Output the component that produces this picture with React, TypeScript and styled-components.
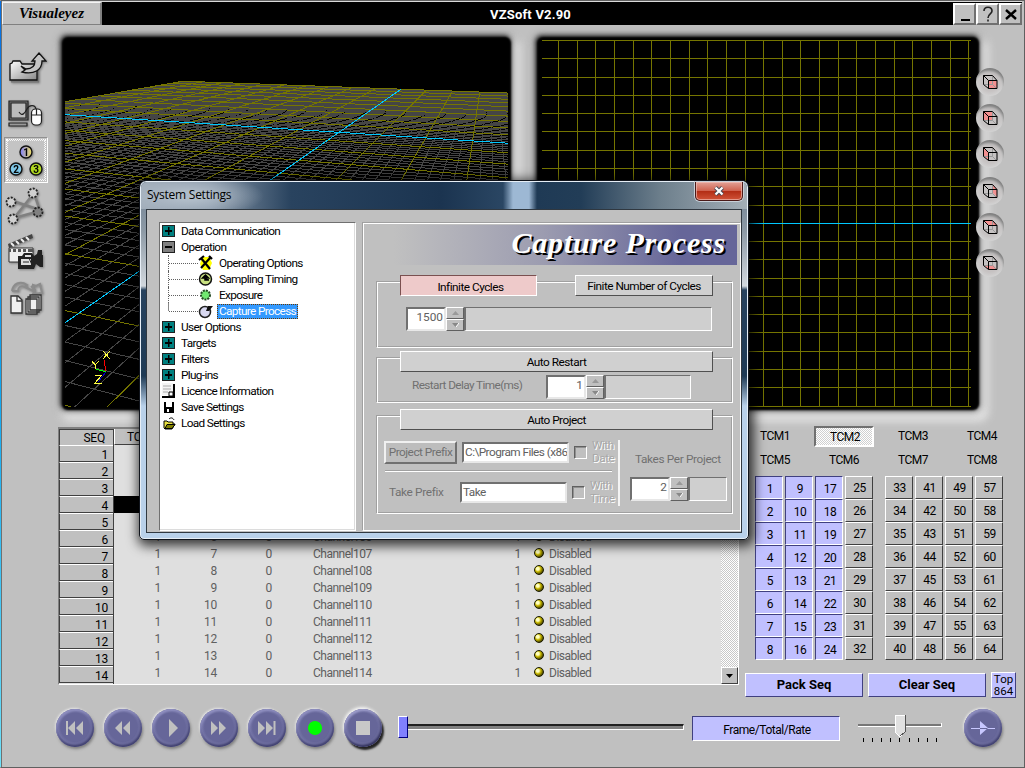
import React from "react";
import styled, { createGlobalStyle, css } from "styled-components";

const UI = `Roboto, "Liberation Sans", sans-serif`;
const FACE = "#c0c0c0";
const LILAC = "#c0c0ff";

const GlobalStyle = createGlobalStyle`
  *, *::before, *::after { box-sizing: border-box; }
  body { margin: 0; background: ${FACE}; overflow: hidden; }
  svg { display: block; }
`;

const checker = (a: string, b: string) => css`
  background: repeating-conic-gradient(${a} 0 25%, ${b} 0 50%) 0 0 / 2px 2px;
`;

/* ---------- window frame ---------- */

const Window = styled.div`
  position: relative;
  width: 1025px;
  height: 768px;
  display: flex;
  flex-direction: column;
  background: linear-gradient(${FACE}, ${FACE}) padding-box,
    linear-gradient(#0a6fe0, #12a5ee 50%, #6fe0f8) border-box;
  border: 1px solid #606060;
  border-left-color: transparent;
  box-shadow: inset 1px 0 0 #707070;
  font: 12px/14px ${UI};
  letter-spacing: -0.2px;
  color: #000;
  overflow: hidden;
`;

const TitleBar = styled.header`
  display: flex;
  height: 24px;
  background: #000;
  border-top: 1px solid #d8d8d8;
  margin: 0 2px 0 1px;
`;

const Brand = styled.div`
  width: 100px;
  background: ${FACE};
  border: 1px solid #f4f4f4;
  border-right: 2px solid #808080;
  border-bottom-color: #808080;
  font: italic bold 15px/21px "Liberation Serif", serif;
  letter-spacing: 0;
  text-align: center;
  padding-right: 0;
`;

const AppTitle = styled.h1`
  flex: 1;
  margin: 0;
  color: #fff;
  font: bold 13px/25px ${UI};
  letter-spacing: 0.2px;
  text-align: center;
  padding-left: 6px;
`;

const WindowButton = styled.button`
  width: 23px;
  height: 22px;
  margin-top: 1px;
  padding: 0;
  display: grid;
  place-items: center;
  background: ${FACE};
  border: 2px solid;
  border-color: #fff #707070 #707070 #fff;
`;

const Upper = styled.section`
  display: flex;
  height: 402px;
`;

const Sidebar = styled.nav`
  width: 64px;
  padding: 20px 0 0 3px;
  display: flex;
  flex-direction: column;
  flex: none;
`;

const Tool = styled.button<{ $active?: boolean }>`
  width: 44px;
  height: 46px;
  padding: 0;
  border: 1px solid transparent;
  background: none;
  display: grid;
  place-items: center;
  svg {
    filter: drop-shadow(1px 1px 1px #808080);
  }
  ${(p) =>
    p.$active &&
    css`
      border-color: #909090 #fff #fff #909090;
      background: #c4c4c4;
      &::after {
        content: "";
        grid-area: 1 / 1;
        width: 40px;
        height: 42px;
        border: 1px dotted #fff;
        outline: 1px dotted #f4f4f4;
        outline-offset: -2px;
      }
      svg {
        grid-area: 1 / 1;
      }
    `}
`;

const Viewport = styled.div<{ $w: number }>`
  width: ${(p) => p.$w}px;
  height: 367px;
  margin-top: 15px;
  flex: none;
  background: #000;
  border-radius: 3px;
  box-shadow: 0 0 2px 3px #000, -1px -1px 4px 4px #333, 0 0 7px 7px #6a6a6a66, 4px 6px 8px 8px #e8e8e8;
`;

const Gap = styled.div`
  width: 32px;
  flex: none;
`;

const ViewButtons = styled.div`
  display: flex;
  flex-direction: column;
  gap: 8.2px;
  padding-top: 43px;
`;

const ViewButton = styled.button`
  width: 28px;
  height: 28px;
  border: 0;
  padding: 0 0 0 1px;
  border-radius: 50%;
  background: radial-gradient(#c6c2c2 45%, #d2d2d2 70%, #c4c4c4);
  box-shadow: inset -1px 4px 3px -1px #7d7d7d;
  display: grid;
  place-items: center;
`;

/* ---------- sequence table ---------- */

const Lower = styled.section`
  display: flex;
  height: 273px;
  padding-left: 57px;
`;

const Table = styled.div`
  width: 681px;
  height: 258px;
  display: flex;
  border: 1px solid;
  border-color: #808080 #fff #fff #808080;
  border-top-width: 2px;
  background: #dfdfdf;
`;

const SeqColumn = styled.div`
  width: 55px;
  border-right: 1px solid #404040;
`;

const HeadCell = styled.div<{ $w: number }>`
  width: ${(p) => p.$w}px;
  height: 16px;
  line-height: 17px;
  text-align: right;
  padding-right: 8px;
  background: ${FACE};
  border-left: 1px solid #404040;
  border-top: 1px solid #404040;
`;

const SeqCell = styled.div`
  height: 17px;
  padding-right: 5px;
  line-height: 18px;
  text-align: right;
  background: ${FACE};
  border-left: 1px solid #404040;
  border-top: 1px solid #fff;
  border-bottom: 1px solid #404040;
`;

const Body = styled.div`
  flex: 1;
`;

const BodyHead = styled.div`
  height: 16px;
  line-height: 17px;
  padding-left: 12px;
  background: ${FACE};
  border-left: 1px solid #fff;
  border-bottom: 1px solid #404040;
`;

const Row = styled.div<{ $active?: boolean }>`
  height: 17px;
  line-height: 15px;
  display: grid;
  grid-template-columns: 47px 56px 55px 41px 105px 103px 12px 1fr;
  color: #606060;
  background: ${(p) => (p.$active ? "#000" : "transparent")};
  & > :nth-child(-n + 3),
  & > :nth-child(6) {
    text-align: right;
  }
  & > :nth-child(5),
  & > :nth-child(8) {
    letter-spacing: -0.5px;
  }
`;

const Bullet = styled.i`
  width: 10px;
  height: 10px;
  margin: 1px 0 0 13px;
  border-radius: 50%;
  border: 1.5px solid #1a1a00;
  background: radial-gradient(circle at 35% 35%, #ffffc0 18%, #c8b800 40%, #4a4400 75%);
`;

const Status = styled.span`
  padding-left: 16px;
`;

const Scrollbar = styled.div`
  width: 17px;
  display: flex;
  align-items: flex-end;
  ${checker("#fff", "#c8c8c8")}
`;

const ScrollDown = styled.button`
  width: 17px;
  height: 17px;
  padding: 0;
  border: 1px solid;
  border-color: #fff #404040 #404040 #fff;
  background: ${FACE};
  display: grid;
  place-items: center;
`;

/* ---------- marker panel ---------- */

const MarkerPanel = styled.div`
  width: 282px;
  padding: 0 0 0 1px;
`;

const Tabs = styled.div`
  display: grid;
  grid-template-columns: repeat(4, 69px);
  grid-auto-rows: 24px;
  justify-items: center;
  align-items: center;
  height: 50px;
  margin-top: -3px;
`;

const Tab = styled.button<{ $active?: boolean }>`
  width: 60px;
  height: 21px;
  padding: 0 0 0 1px;
  font: inherit;
  letter-spacing: -0.5px;
  border: 2px solid transparent;
  background: none;
  ${(p) =>
    p.$active &&
    css`
      ${checker("#fff", "#d0d0d0")}
      border-color: #707070 #fff #fff #707070;
      padding: 1px 0 0 3px;
    `}
`;

const Markers = styled.div`
  display: flex;
  gap: 12px;
  padding: 2px 0 0 15px;
`;

const MarkerBlock = styled.div`
  display: grid;
  grid-auto-flow: column;
  grid-template-rows: repeat(8, 23px);
  grid-template-columns: repeat(4, 28px);
  column-gap: 2px;
`;

const Marker = styled.button<{ $on: boolean }>`
  font: 12px/14px ${UI};
  letter-spacing: -0.4px;
  border: 1px solid;
  background: ${(p) => (p.$on ? LILAC : FACE)};
  border-color: ${(p) => (p.$on ? "#404080 #fff #fff #404080" : "#fff #404040 #404040 #fff")};
  padding: ${(p) => (p.$on ? "2px 0 0 2px" : "0 0 0 1px")};
`;

const Actions = styled.div`
  display: flex;
  align-items: center;
  gap: 5px;
  padding: 12px 0 0 5px;
`;

const Action = styled.button<{ $w: number; $small?: boolean }>`
  width: ${(p) => p.$w}px;
  height: ${(p) => (p.$small ? 26 : 24)}px;
  padding: 0;
  font: ${(p) => (p.$small ? `11.5px/12px ${UI}` : `bold 13px/14px ${UI}`)};
  letter-spacing: 0;
  background: ${LILAC};
  border: 1px solid;
  border-color: #fff #404080 #404080 #fff;
`;

/* ---------- transport ---------- */

const Transport = styled.footer`
  display: flex;
  align-items: center;
  height: 56px;
  padding-left: 55px;
`;

const RoundButton = styled.button<{ $dark?: boolean }>`
  width: 38px;
  height: 38px;
  margin-right: 10px;
  flex: none;
  padding: 0;
  border: 0;
  border-radius: 50%;
  display: grid;
  place-items: center;
  background: radial-gradient(circle at 50% 48%, #666699 52%, #7676a8 62%, #5a5a8e 72%);
  box-shadow: ${(p) =>
    p.$dark
      ? "inset 1px 2px 2px #9c9cca, inset -1px -2px 3px #30305a, 2px 3px 2px #222, -1px -2px 3px #f4f4f4"
      : "inset 1px 2px 2px #8f8fc0, inset -1px -2px 3px #40406e, 1px 2px 3px #7c7c7c, -1px -1px 2px #e8e8e8"};
`;

const Timeline = styled.div`
  width: 286px;
  margin: -3px 0 0 6px;
  display: flex;
  align-items: center;
`;

const TimeThumb = styled.div`
  width: 10px;
  height: 22px;
  background: #8080ff;
  border: 1px solid;
  border-color: #fff #000080 #000080 #fff;
`;

const TimeTrack = styled.div`
  flex: 1;
  height: 6px;
  border-top: 2px solid #202020;
  border-bottom: 1px solid #fff;
  border-right: 1px solid #fff;
  background: #808080;
`;

const FrameBox = styled.div`
  width: 148px;
  height: 25px;
  margin-left: 8px;
  padding-left: 2px;
  background: ${LILAC};
  border: 1px solid;
  border-color: #404080 #fff #fff #404080;
  line-height: 26px;
  letter-spacing: -0.45px;
  text-align: center;
`;

const RateSlider = styled.div`
  margin: 2px 21px 0 17px;
`;

/* ---------- settings dialog ---------- */

const Dialog = styled.section`
  position: absolute;
  left: 138px;
  top: 179px;
  width: 610px;
  height: 360px;
  padding: 0 6px 7px;
  border: 1px solid #10141c;
  border-radius: 7px 7px 5px 5px;
  background: linear-gradient(#6e7f92 0, #8d9aa6 50px, #d2d8de 105px, #28435f 109px, #1e3a55 195px, #b9d1ea 225px, #b9d1ea);
  box-shadow: inset 0 0 0 1px #e6eef6, 2px 3px 12px 3px rgba(0, 0, 0, 0.75);
  font: 11.8px/15px ${UI};
  letter-spacing: -0.5px;
`;

const DialogTitle = styled.div`
  height: 27px;
  margin: 1px -5px 0;
  padding-left: 6px;
  display: flex;
  justify-content: space-between;
  border-radius: 6px 6px 0 0;
  background: radial-gradient(ellipse 75px 22px at 48px 14px, #b0bcc8 20%, transparent),
    linear-gradient(90deg, #9fabb8 0, #8494a5 70px, #29435f 150px, #1b3450 300px, #2a4663 362px, #9db8d4 372px, #9db8d4 388px, #1f3a55 396px, #223d57 440px, #6d7f8c 520px, #a4afb7 100%);
  font: 12px/26px "Open Sans", "Noto Sans", sans-serif;
  letter-spacing: -0.25px;
`;

const CloseButton = styled.button`
  width: 48px;
  height: 19px;
  margin-right: 4px;
  padding: 0;
  display: grid;
  place-items: center;
  border: 1px solid #4a1a18;
  border-top: 0;
  border-radius: 0 0 5px 5px;
  background: linear-gradient(#e2a196, #cf6350 48%, #b22c14 50%, #d05338);
  box-shadow: inset 0 0 0 1px #f0c0b8aa, 0 0 0 1px #c8d0d8;
`;

const Client = styled.div`
  height: 324px;
  display: flex;
  background: ${FACE};
  border: 1px solid #303840;
  padding: 12px 0 1px 12px;
`;

const Tree = styled.ul`
  width: 197px;
  height: 309px;
  flex: none;
  margin: 0;
  padding: 0 0 0 2px;
  list-style: none;
  background: #fff;
  border: 1px solid;
  border-color: #707070 #fff #fff #707070;
  box-shadow: inset -1px -1px 0 #dcdcdc;
`;

const TreeItem = styled.li<{ $child?: boolean }>`
  height: 16px;
  display: flex;
  align-items: center;
  white-space: nowrap;
  letter-spacing: -0.65px;
  ${(p) =>
    p.$child &&
    css`
      margin-left: 6px;
      border-left: 1px dotted #606060;
      &::before {
        content: "";
        width: 29px;
        border-top: 1px dotted #606060;
      }
      &:has(b) {
        border-left: 0;
        background: linear-gradient(#888, #888) 0 0 / 1px 8px no-repeat;
        padding-left: 1px;
      }
    `}
  svg {
    flex: none;
    margin-right: ${(p) => (p.$child ? 4 : 2)}px;
  }
  span, b {
    font-weight: 400;
    padding: 0 2px;
    line-height: 15px;
  }
  b {
    color: #fff;
    background: #3399ff;
    outline: 1px dotted #6b3a00;
    outline-offset: -1px;
  }
`;

const Toggle = styled.i<{ $open?: boolean }>`
  width: 13px;
  height: 12px;
  margin: 0 4px 0 0;
  border: 1px solid #202020;
  background: linear-gradient(#000, #000) center / 7px 2px no-repeat,
    linear-gradient(#000, #000) center / ${(p) => (p.$open ? "0 0" : "1.5px 8px")} no-repeat,
    ${(p) => (p.$open ? "#808080" : "#008080")};
`;

const Pane = styled.div`
  flex: 1;
  min-width: 0;
  margin-left: 6px;
  padding: 2px 0 0;
  border: 1px solid #a0a0a0;
  border-bottom-color: #fff;
  border-right-color: #fff;
  box-shadow: inset 1px 1px 0 #fff;
`;

const Banner = styled.h2`
  height: 40px;
  margin: 0 3px 0 1px;
  padding-right: 11px;
  background: linear-gradient(90deg, ${FACE} 8%, #9c9cb0 48%, #666699 85%);
  color: #fff;
  font: italic bold 30px/35px "Liberation Serif", serif;
  letter-spacing: 0.8px;
  text-align: right;
  text-shadow: 2px 2px 0 #000;
`;

const Group = styled.div<{ $h: number; $top: number }>`
  height: ${(p) => p.$h}px;
  margin: ${(p) => p.$top}px 7px 0 13px;
  border: 1px solid;
  border-color: #a0a0a0 #fff #fff #a0a0a0;
  box-shadow: inset 1px 1px 0 #fff, inset -1px -1px 0 #a0a0a0;
`;

const GroupHead = styled.div`
  display: flex;
  justify-content: space-between;
  margin: -7px 19px 0 23px;
  position: relative;
`;

const Push = styled.button<{ $w: number; $on?: boolean }>`
  width: ${(p) => p.$w}px;
  height: 21px;
  padding: ${(p) => (p.$on ? "3px 0 0 4px" : "1px 0 0")};
  font: inherit;
  letter-spacing: inherit;
  white-space: nowrap;
  background: ${(p) => (p.$on ? "#eecaca" : "#d0d0d0")};
  border: 1px solid;
  border-color: ${(p) => (p.$on ? "#7a5050 #fff #fff #7a5050" : "#fff #505050 #505050 #fff")};
`;

const SpinRow = styled.div<{ $m: string }>`
  display: flex;
  align-items: flex-start;
  margin: ${(p) => p.$m};
`;

const Field = styled.div<{ $w: number; $h: number; $right?: boolean }>`
  width: ${(p) => p.$w}px;
  height: ${(p) => p.$h}px;
  flex: none;
  overflow: hidden;
  white-space: nowrap;
  padding: 0 1px;
  background: #fff;
  color: #606060;
  line-height: 17px;
  letter-spacing: ${(p) => (p.$right ? 0 : -0.55)}px;
  text-align: ${(p) => (p.$right ? "right" : "left")};
  border: 2px solid;
  border-color: #707070 #e8e8e8 #e8e8e8 #707070;
`;

const Spinner = styled.div`
  width: 18px;
  height: 24px;
  flex: none;
  display: grid;
  grid-template-rows: 1fr 1fr;
`;

const SpinButton = styled.button`
  padding: 0;
  border: 1px solid;
  border-color: #fff #606060 #606060 #fff;
  background: ${FACE};
  display: grid;
  place-items: center;
`;

const Slot = styled.div<{ $w: number }>`
  width: ${(p) => p.$w}px;
  height: 24px;
  background: #cfcfcf;
  border: 1px solid;
  border-color: #707070 #fff #fff #707070;
  border-left-width: 2px;
`;

const Muted = styled.span`
  color: #707070;
  white-space: nowrap;
  letter-spacing: -0.35px;
`;

const DelayLabel = styled(Muted)`
  width: 134px;
  padding-top: 3px;
  letter-spacing: -0.6px;
`;

const ProjectBody = styled.div`
  display: flex;
  padding: 10px 0 0 7px;
`;

const PrefixColumn = styled.div`
  width: 236px;
  height: 66px;
  flex: none;
  border-right: 2px solid #f4f4f4;
`;

const PrefixRow = styled.div<{ $take?: boolean }>`
  display: flex;
  align-items: center;
  height: ${(p) => (p.$take ? 32 : 26)}px;
  margin-top: ${(p) => (p.$take ? 4 : -1)}px;
`;

const Divider = styled.hr`
  width: 227px;
  height: 2px;
  margin: 5px 0 0 1px;
  border: 0;
  border-top: 1px solid #a0a0a0;
  background: #fff;
`;

const PrefixButton = styled.button`
  width: 73px;
  height: 23px;
  flex: none;
  margin-right: 5px;
  padding: 0;
  font: inherit;
  letter-spacing: inherit;
  white-space: nowrap;
  color: #707070;
  background: #bdbdbd;
  border: 2px solid;
  border-color: #f0f0f0 #707070 #707070 #f0f0f0;
`;

const PrefixLabel = styled(Muted)`
  width: 76px;
  flex: none;
  padding-left: 5px;
`;

const CheckBox = styled.div`
  width: 13px;
  height: 13px;
  margin: 0 5px;
  border: 1px solid;
  border-color: #606060 #fff #fff #606060;
  box-shadow: inset 1px 1px 0 #909090;
  flex: none;
`;

const Embossed = styled.span`
  line-height: 13px;
  color: #a8a8a8;
  text-shadow: 1px 1px 0 #fff;
`;

const TakesColumn = styled.div`
  padding: 12px 0 0 10px;
  ${Muted} {
    padding-left: 5px;
  }
`;

/* ---------- drawings ---------- */

type Pt = [number, number];

const FLOOR = { c: [339, 132.3], a: -0.0254, va: [-1280, 28], b: -0.0705, vb: [489, 28] };

function project(u: number, v: number): Pt {
  const s = u * FLOOR.a;
  const t = v * FLOOR.b;
  const w = 1 + s + t;
  return [
    (FLOOR.c[0] + s * FLOOR.va[0] + t * FLOOR.vb[0]) / w - 65,
    (FLOOR.c[1] + s * FLOOR.va[1] + t * FLOOR.vb[1]) / w - 40,
  ];
}

function floorPath(filter: (i: number) => boolean) {
  let d = "";
  const seg = (p: Pt, q: Pt) => {
    d += `M${p[0].toFixed(1)} ${p[1].toFixed(1)}L${q[0].toFixed(1)} ${q[1].toFixed(1)}`;
  };
  for (let i = -50; i <= 50; i++) {
    if (!filter(i)) continue;
    const k = i / 5;
    seg(project(k, -10), project(k, 10));
    seg(project(-10, k), project(10, k));
  }
  return d;
}

const GREY_LINES = floorPath((i) => i % 5 !== 0);
const OLIVE_LINES = floorPath((i) => i % 5 === 0 && i !== 0);
const AXIS_LINES = floorPath((i) => i === 0);

const Perspective = () => (
  <svg width="443" height="367" fill="none" strokeWidth="1" shapeRendering="crispEdges">
    <path d={GREY_LINES} stroke="#454545" />
    <path d={OLIVE_LINES} stroke="#757500" />
    <path d={AXIS_LINES} stroke="#00c8ff" />
    <path d="M41 332L39 320" stroke="#f00" />
    <path d="M41 332L31 329" stroke="#0f0" />
    <path d="M41 332L33 342" stroke="#00c" />
    <path d="M38 319l7-8M38 311l7 8M27 321l3 4 4-4M30 325v4M30 335h7l-7 8h7" stroke="#ffff40" />
  </svg>
);

const Ortho = () => {
  const h = Array.from({ length: 21 }, (_, i) => Math.round(i * 18.28) + 0.5);
  const v = Array.from({ length: 23 }, (_, i) => Math.round(18 + i * 18.65) + 0.5);
  return (
    <svg width="436" height="367" stroke="#757500" shapeRendering="crispEdges">
      {v.map((x) => (
        <path key={x} d={`M${x} 0V367`} />
      ))}
      {h.map((y, i) => (
        <path key={y} d={`M2 ${y}H431`} stroke={i === 10 ? "#00c8ff" : undefined} />
      ))}
    </svg>
  );
};

const FACES = ["M5 5h9v8H5z", "M1 1h9v8H1z", "M1 1l4 4v8l-4-4z", "M10 1l4 4v8l-4-4z", "M1 1h9l4 4H5z", "M1 9h9l4 4H5z"];

const Cube = ({ face }: { face: number }) => (
  <svg width="15" height="14" fill="none" stroke="#000">
    <path d={FACES[face]} fill="#f29090" stroke="none" />
    <path d="M9.500 1v8.500H1M9.500 9.500l4 4" stroke="#999" />
    <path d="M5.500 5.500h8.500v8H5.500zM.5 .5h9l4.500 5M.5 .5v9l5 4M.5 .5l5 5" />
  </svg>
);

const OpenProject = () => (
  <svg width="42" height="42" viewBox="0 0 42 42" stroke="#111" strokeWidth="1.3">
    <defs>
      <linearGradient id="metal" x1="0" y1="0" x2="1" y2="1">
        <stop offset="0" stopColor="#fff" />
        <stop offset="1" stopColor="#888" />
      </linearGradient>
    </defs>
    <path d="M6 34.500h27V17" stroke="#777" strokeWidth="2" fill="none" />
    <path d="M5 33V17l2-1 1-2h7l2 3h15v16z" fill="url(#metal)" />
    <path d="M16 19l5 3c7 0 9-4 9-8h-3l7-8 7 8h-4c0 9-8 14-20 11l3-2z" fill="#c4c4c4" />
  </svg>
);

const Computer = () => (
  <svg width="42" height="42" viewBox="0 0 42 42" stroke="#222" strokeWidth="1.2">
    <path d="M4 8h19v19H4z" fill="#777" />
    <path d="M6 10h15v15H6z" fill="#bcbcbc" />
    <path d="M4 30h18v3H4z" fill="#999" />
    <path d="M14 19c3 5 6 1 8-3s8-5 9 0" fill="none" />
    <rect x="26.500" y="16" width="10" height="16" rx="4" fill="#fff" />
    <path d="M26.500 22h10M31.500 16v6" />
  </svg>
);

const Targets = () => (
  <svg width="42" height="42" viewBox="0 0 42 42" stroke="#111" strokeWidth="1.4" fontFamily="Roboto" fontWeight="700" fontSize="10" textAnchor="middle">
    <defs>
      <linearGradient id="ball" x1="0" x2="1">
        <stop offset="0" stopColor="#8080ff" />
        <stop offset="1" stopColor="#f0e060" />
      </linearGradient>
    </defs>
    <circle cx="21" cy="13" r="6" fill="url(#ball)" />
    <circle cx="11" cy="30" r="6" fill="#80c8e8" />
    <circle cx="31" cy="30" r="6" fill="#b0d820" />
    <g stroke="none">
      <text x="21" y="17">1</text>
      <text x="11" y="34">2</text>
      <text x="31" y="34">3</text>
    </g>
  </svg>
);

const Links = () => (
  <svg width="42" height="42" viewBox="0 0 42 42" fill="none" stroke="#808080" strokeWidth="2.500">
    <path d="M8 16l27 9M9 33l20-25 6 18L9 33" />
    <g stroke="#222" strokeWidth="1.800" strokeDasharray="2 1.400" fill="#d0d0d0">
      <circle cx="28" cy="8" r="4.500" />
      <circle cx="6" cy="17" r="4.500" />
      <circle cx="33" cy="27" r="4.500" fill="#808080" />
      <circle cx="8" cy="34" r="4.500" />
    </g>
  </svg>
);

const Camera = () => (
  <svg width="42" height="42" viewBox="0 0 42 42">
    <path d="M3 13L27 3l1 4L4 17z" fill="#444" />
    <path d="M6 12l3 3M11 10l3 3M16 8l3 3M21 6l3 3" stroke="#eee" strokeWidth="2" />
    <path d="M4 17h24v14H4z" fill="#eee" stroke="#333" />
    <path d="M4 18h24v3H4z" fill="#555" />
    <path d="M7 18v3M12 18v3M17 18v3M22 18v3" stroke="#eee" strokeWidth="2" />
    <path d="M13 25h4l2-3h8l2 3 3-2 1-4h4v5h1v12h-3l-4-3-2 5H13z" fill="#222" />
    <path d="M16 28h10v6H16zM20 24h6v2h-6z" fill="#ddd" />
    <path d="M24 27l3 7M18 31h6" stroke="#222" />
  </svg>
);

const Copies = () => (
  <svg width="42" height="42" viewBox="0 0 42 42" fill="#f0f0f0" stroke="#333" strokeWidth="1.300">
    <path d="M7 14c1-7 8-11 15-6l-2 2 8 4V8l3 1 4-2 2 9-9 1 2-4-4-4M7 14h6c0-4 3-6 7-4" fill="none" stroke="#8c8c8c" strokeWidth="2" />
    <path d="M6 19h7l4 4v13H6zM25 18h11v15H25zM23 20h11v15H23zM21 22h11v15H21z" />
    <path d="M12 19v5h5" fill="none" />
  </svg>
);

const TOOLS = [OpenProject, Computer, Targets, Links, Camera, Copies];

const TRANSPORT: [string, string][] = [
  ["M-9-7h2V7h-2zM0-7v14l-7-7zM8-7v14l-7-7z", "#c0c0c0"],
  ["M-1-7v14l-7-7zM7-7v14l-7-7z", "#c0c0c0"],
  ["M-2-9v18l9-9z", "#c0c0c0"],
  ["M-8-7v14l7-7zM0-7v14l7-7z", "#c0c0c0"],
  ["M-9-7v14l7-7zM-1-7v14l7-7zM6.500-7h2V7h-2z", "#c0c0c0"],
  ["M0-7a7 7 0 1 0 .01 0z", "#00ff00"],
  ["M-7-7h14v14H-7z", "#c8c8c8"],
  ["M-12 0h24v1h-24zM-3-7v14l8-7z", "#c8c8ff"],
];

const Glyph = ({ n }: { n: number }) => (
  <svg width="38" height="38" viewBox="-19 -19 38 38">
    <path d={TRANSPORT[n][0]} fill={TRANSPORT[n][1]} />
  </svg>
);

const TreeIcon = ({ kind }: { kind: string }) => (
  <svg width="15" height="16" viewBox="0 0 15 16">
    {kind === "tools" && (
      <>
        <path d="M4 2h7l3 6-3 7H5L2 9z" fill="#ff0" />
        <path d="M3 3l9 11M12 3L3 13M1 5l5-4M11 1l3 3" stroke="#000" strokeWidth="2.200" />
      </>
    )}
    {kind === "clock" && (
      <>
        <circle cx="7.500" cy="8" r="6" fill="#c8e080" stroke="#111" strokeWidth="1.500" />
        <path d="M4.500 7l3-3 3 3zM7 6v3h4" fill="#000" stroke="#000" strokeWidth="1.500" />
      </>
    )}
    {kind === "led" && <circle cx="7.500" cy="8" r="4.500" fill="#70e870" stroke="#244a24" strokeWidth="2" strokeDasharray="2 1" />}
    {kind === "dial" && (
      <>
        <circle cx="7" cy="9" r="5.500" fill="#d8d8f0" stroke="#222" strokeWidth="1.500" />
        <path d="M8 8l2-5h5l-4 5z" fill="#111" />
      </>
    )}
    {kind === "licence" && (
      <>
        <path d="M0 0h11v12H0z" fill="#f4f4f4" />
        <path d="M1 3h8M1 6h8M1 9h5" stroke="#aaa" />
        <path d="M0 13h11V1h2v14H0z" />
        <path d="M7 9h4v4H7z" fill="#fff" stroke="#000" />
      </>
    )}
    {kind === "save" && (
      <>
        <path d="M2 3h10v11H2z" />
        <path d="M4 3h6v5H4zM5 10h2v3H5z" fill="#fff" />
      </>
    )}
    {kind === "load" && (
      <>
        <path d="M2 13V6h3l1 1h5v2h2l-3 5H3z" fill="#e8e040" stroke="#000" />
        <path d="M5 9.500h8l-3 4H3z" fill="#808000" stroke="#000" />
        <path d="M7 4c2-2 4-1 5 1" fill="none" stroke="#000" />
      </>
    )}
  </svg>
);

type Node = { label: string; icon?: string; child?: boolean; open?: boolean; selected?: boolean };

const TREE: Node[] = [
  { label: "Data Communication" },
  { label: "Operation", open: true },
  { label: "Operating Options", icon: "tools", child: true },
  { label: "Sampling Timing", icon: "clock", child: true },
  { label: "Exposure", icon: "led", child: true },
  { label: "Capture Process", icon: "dial", child: true, selected: true },
  { label: "User Options" },
  { label: "Targets" },
  { label: "Filters" },
  { label: "Plug-ins" },
  { label: "Licence Information", icon: "licence" },
  { label: "Save Settings", icon: "save" },
  { label: "Load Settings", icon: "load" },
];

const Spin = ({ value, slot, m }: { value: string; slot: number; m: string }) => (
  <SpinRow $m={m}>
    <Field $w={40} $h={24} $right>
      {value}
    </Field>
    <Spinner>
      <SpinButton>
        <svg width="7" height="4"><path d="M0 4l3.500-4L7 4z" fill="#999" /></svg>
      </SpinButton>
      <SpinButton>
        <svg width="7" height="4"><path d="M0 0l3.500 4L7 0z" fill="#888" /><path d="M4 4l3-4" stroke="#fff" /></svg>
      </SpinButton>
    </Spinner>
    <Slot $w={slot} />
  </SpinRow>
);

const SettingsDialog = () => (
  <Dialog>
    <DialogTitle>
      System Settings
      <CloseButton>
        <svg width="12" height="10" viewBox="0 0 12 10">
          <path d="M2.500 1.500l7 7M9.500 1.500l-7 7" stroke="#444a58" strokeWidth="4" />
          <path d="M2.500 1.500l7 7M9.500 1.500l-7 7" stroke="#fff" strokeWidth="2.200" />
        </svg>
      </CloseButton>
    </DialogTitle>
    <Client>
      <Tree>
        {TREE.map((n) => (
          <TreeItem key={n.label} $child={n.child}>
            {n.icon ? <TreeIcon kind={n.icon} /> : <Toggle $open={n.open} />}
            {n.selected ? <b>{n.label}</b> : <span>{n.label}</span>}
          </TreeItem>
        ))}
      </Tree>
      <Pane>
        <Banner>Capture Process</Banner>
        <Group $h={67} $top={16}>
          <GroupHead>
            <Push $w={137} $on>Infinite Cycles</Push>
            <Push $w={138}>Finite Number of Cycles</Push>
          </GroupHead>
          <Spin value="1500" slot={248} m="11px 0 0 29px" />
        </Group>
        <Group $h={46} $top={9}>
          <GroupHead>
            <Push $w={313}>Auto Restart</Push>
          </GroupHead>
          <SpinRow $m="3px 0 0 35px">
            <DelayLabel>Restart Delay Time(ms)</DelayLabel>
            <Spin value="1" slot={87} m="0" />
          </SpinRow>
        </Group>
        <Group $h={99} $top={12}>
          <GroupHead>
            <Push $w={313}>Auto Project</Push>
          </GroupHead>
          <ProjectBody>
            <PrefixColumn>
              <PrefixRow>
                <PrefixButton>Project Prefix</PrefixButton>
                <Field $w={107} $h={21}>C:\Program Files (x86</Field>
                <CheckBox />
                <Embossed>With<br />Date</Embossed>
              </PrefixRow>
              <Divider />
              <PrefixRow $take>
                <PrefixLabel>Take Prefix</PrefixLabel>
                <Field $w={107} $h={21}>Take</Field>
                <CheckBox />
                <Embossed>With<br />Time</Embossed>
              </PrefixRow>
            </PrefixColumn>
            <TakesColumn>
              <Muted>Takes Per Project</Muted>
              <Spin value="2" slot={39} m="10px 0 0" />
            </TakesColumn>
          </ProjectBody>
        </Group>
      </Pane>
    </Client>
  </Dialog>
);

const ROWS = Array.from({ length: 14 }, (_, i) => i + 1);

export default function App() {
  return (
    <>
      <GlobalStyle />
      <Window>
        <TitleBar>
          <Brand>Visualeyez</Brand>
          <AppTitle>VZSoft V2.90</AppTitle>
          <WindowButton>
            <svg width="16" height="16"><path d="M4 14h9" stroke="#000" strokeWidth="2" /></svg>
          </WindowButton>
          <WindowButton>
            <svg width="16" height="18" fill="none" stroke="#222" strokeWidth="1.600"><path d="M4 6c0-5 8-5 8 0 0 3-4 3-4 7M8 14.500v2" /></svg>
          </WindowButton>
          <WindowButton>
            <svg width="16" height="16"><path d="M3 4l10 9M13 4L3 13" stroke="#000" strokeWidth="2.400" /></svg>
          </WindowButton>
        </TitleBar>

        <Upper>
          <Sidebar>
            {TOOLS.map((Icon, i) => (
              <Tool key={i} $active={i === 2}>
                <Icon />
              </Tool>
            ))}
          </Sidebar>
          <Viewport $w={443}>
            <Perspective />
          </Viewport>
          <Gap />
          <Viewport $w={436}>
            <Ortho />
          </Viewport>
          <ViewButtons>
            {FACES.map((_, i) => (
              <ViewButton key={i}>
                <Cube face={i} />
              </ViewButton>
            ))}
          </ViewButtons>
        </Upper>

        <Lower>
          <Table>
            <SeqColumn>
              <HeadCell $w={54}>SEQ</HeadCell>
              {ROWS.map((n) => (
                <SeqCell key={n}>{n}</SeqCell>
              ))}
            </SeqColumn>
            <Body>
              <BodyHead>TCM</BodyHead>
              {ROWS.map((n) => (
                <Row key={n} $active={n === 4}>
                  <span>1</span>
                  <span>{n}</span>
                  <span>0</span>
                  <span />
                  <span>Channel{100 + n}</span>
                  <span>1</span>
                  <Bullet />
                  <Status>Disabled</Status>
                </Row>
              ))}
            </Body>
            <Scrollbar>
              <ScrollDown>
                <svg width="7" height="4"><path d="M0 0h7L3.500 4z" /></svg>
              </ScrollDown>
            </Scrollbar>
          </Table>
          <MarkerPanel>
            <Tabs>
              {[1, 2, 3, 4, 5, 6, 7, 8].map((n) => (
                <Tab key={n} $active={n === 2}>TCM{n}</Tab>
              ))}
            </Tabs>
            <Markers>
              {[0, 32].map((base) => (
                <MarkerBlock key={base}>
                  {Array.from({ length: 32 }, (_, i) => base + i + 1).map((n) => (
                    <Marker key={n} $on={n <= 24}>{n}</Marker>
                  ))}
                </MarkerBlock>
              ))}
            </Markers>
            <Actions>
              <Action $w={118}>Pack Seq</Action>
              <Action $w={118}>Clear Seq</Action>
              <Action $w={25} $small>Top 864</Action>
            </Actions>
          </MarkerPanel>
        </Lower>

        <Transport>
          {[0, 1, 2, 3, 4, 5, 6].map((n) => (
            <RoundButton key={n} $dark={n === 6}>
              <Glyph n={n} />
            </RoundButton>
          ))}
          <Timeline>
            <TimeThumb />
            <TimeTrack />
          </Timeline>
          <FrameBox>Frame/Total/Rate</FrameBox>
          <RateSlider>
            <svg width="86" height="30" shapeRendering="crispEdges">
              <path d="M1 10.500h83" stroke="#777" strokeWidth="2" />
              <path d="M1 12.500h83V9" stroke="#fff" fill="none" />
              <path d="M38 1h10v17l-5 5-5-5z" fill="#e0e0e0" stroke="#fff" />
              <path d="M48 1v17l-5 4" fill="none" stroke="#555" />
              <path d={Array.from({ length: 9 }, (_, i) => `M${Math.round(6 + i * 9.1) + 0.5} 24v4`).join("")} stroke="#000" />
            </svg>
          </RateSlider>
          <RoundButton>
            <Glyph n={7} />
          </RoundButton>
        </Transport>

        <SettingsDialog />
      </Window>
    </>
  );
}
